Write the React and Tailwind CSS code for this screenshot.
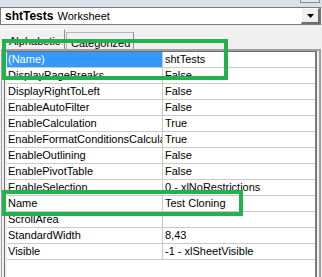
import React from "react";

const rows = [
  ["(Name)", "shtTests"],
  ["DisplayPageBreaks", "False"],
  ["DisplayRightToLeft", "False"],
  ["EnableAutoFilter", "False"],
  ["EnableCalculation", "True"],
  ["EnableFormatConditionsCalculation", "True"],
  ["EnableOutlining", "False"],
  ["EnablePivotTable", "False"],
  ["EnableSelection", "0 - xlNoRestrictions"],
  ["Name", "Test Cloning"],
  ["ScrollArea", ""],
  ["StandardWidth", "8,43"],
  ["Visible", "-1 - xlSheetVisible"],
];

export default function App() {
  return (
    <div
      className="relative w-[322px] h-[277px] overflow-hidden bg-[#f0f0f0] flex flex-col text-black"
      style={{ fontFamily: '"Liberation Sans", Arial, sans-serif' }}
    >
      {/* window strip */}
      <div className="h-[7px] bg-[#d9e1ea] flex justify-end pr-[2px]">
        <div className="w-[20px] h-[3px] border-b border-l border-r border-[#8c8c8c] bg-[#e6e6e6]" />
      </div>

      {/* object combo */}
      <div className="h-[18px] w-[321px] border border-[#7a7a7a] bg-white flex items-center">
        <div className="flex-1 pl-[4px] flex items-baseline whitespace-nowrap">
          <span className="font-bold text-[12px]">shtTests</span>
          <span className="text-[11px] ml-[4px]">Worksheet</span>
        </div>
        <div className="w-[19px] h-full bg-[#f0f0f0] border-t border-l border-white border-r-2 border-b-2 border-r-[#6e6e6e] border-b-[#6e6e6e] flex items-center justify-center">
          <svg width="7" height="4" viewBox="0 0 7 4">
            <path d="M0 0h7L3.5 4z" fill="#000" />
          </svg>
        </div>
      </div>

      {/* tabs */}
      <div className="h-[24px] flex items-end pl-[2px] gap-[1px]">
        <div className="h-[20px] w-[63px] border-t border-l border-r border-white border-r-[#8c8c8c] bg-[#f0f0f0] text-[11px] pl-[6px] pt-[3px] whitespace-nowrap">
          Alphabetic
        </div>
        <div className="h-[17px] w-[68px] border-t border-l border-r border-[#b4b4b4] border-r-[#8c8c8c] bg-[#f0f0f0] text-[11px] pl-[4px] pt-[2px] whitespace-nowrap">
          Categorized
        </div>
      </div>

      {/* property grid */}
      <div className="flex-1 ml-[1px] w-[320px] border-t-2 border-l border-r-2 border-[#a0a0a0] pl-[2px] pr-[2px] flex">
        <div className="flex-1 border-t border-l border-r-2 border-[#6e6e6e] border-r-[#7a7a7a] flex">
          <div className="w-[2px] bg-[#f0f0f0]" />
          <div className="flex-1 bg-white flex flex-col">
            {rows.map(([k, v], i) => (
              <div key={k} className="h-[16px] flex border-b border-[#c8c8c8] text-[11px] leading-[15px]">
                <div
                  className={
                    "w-[156px] pl-[1px] overflow-hidden whitespace-nowrap border-r border-[#c8c8c8] " +
                    (i === 0 ? "bg-[#3399ff] text-white" : "")
                  }
                >
                  {k}
                </div>
                <div className="flex-1 pl-[2px] whitespace-nowrap overflow-hidden">{v}</div>
              </div>
            ))}
          </div>
        </div>
      </div>

      {/* annotation boxes */}
      <div className="absolute left-[2px] top-[39px] w-[226px] h-[41px] border-4 border-[#22b14c]" />
      <div className="absolute left-[2px] top-[190px] w-[241px] h-[26px] border-4 border-[#22b14c]" />
    </div>
  );
}
